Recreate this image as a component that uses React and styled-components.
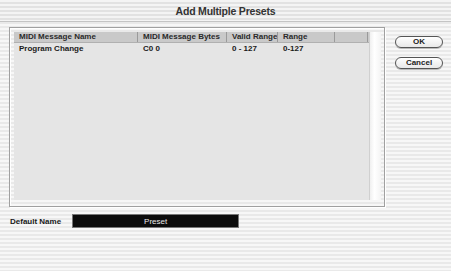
import React from "react";
import styled, { createGlobalStyle } from "styled-components";

const Global = createGlobalStyle`
  html, body { margin: 0; padding: 0; }
  body {
    width: 451px; height: 271px; overflow: hidden;
    font-family: "Liberation Sans", "DejaVu Sans", sans-serif;
  }
`;

const Window = styled.div`
  width: 451px;
  height: 271px;
  display: flex;
  flex-direction: column;
  background: repeating-linear-gradient(
    to bottom,
    #f7f7f7 0px, #f7f7f7 2px,
    #e9e9e9 2px, #e9e9e9 4px
  );
`;

const TitleBar = styled.div`
  height: 22px;
  display: flex;
  align-items: center;
  justify-content: center;
  font-size: 10.5px;
  font-weight: bold;
  letter-spacing: -0.2px;
  color: #333;
  border-bottom: 1px solid #c4c4c4;
  box-sizing: border-box;
  background: repeating-linear-gradient(
    to bottom,
    #f4f4f4 0px, #f4f4f4 2px,
    #e2e2e2 2px, #e2e2e2 4px
  );
`;

const Body = styled.div`
  display: flex;
  padding: 5px 0 0 9px;
  gap: 10px;
`;

const Panel = styled.div`
  width: 376px;
  height: 180px;
  box-sizing: border-box;
  border: 1px solid #a0a0a0;
  box-shadow: inset 1px 1px 0 #fff, 1px 1px 0 #fff;
  padding: 4px 3px 6px 4px;
  display: flex;
`;

const Table = styled.div`
  flex: 1;
  background: #e5e5e5;
  display: flex;
  flex-direction: column;
  font-size: 8px;
  color: #111;
`;

const Header = styled.div`
  display: flex;
  height: 11px;
  background: #c9c9c9;
  border-bottom: 1px solid #b0b0b0;
  box-sizing: border-box;
`;

const HeadCell = styled.div`
  width: ${p => p.$w}px;
  box-sizing: border-box;
  padding-left: 5px;
  border-right: 1px solid #9a9a9a;
  white-space: nowrap;
  overflow: hidden;
  line-height: 10px;
  font-weight: bold;
  color: #2a2a2a;
`;

const Row = styled.div`
  display: flex;
  height: 12px;
  line-height: 12px;
`;

const Cell = styled.div`
  width: ${p => p.$w}px;
  box-sizing: border-box;
  padding-left: 5px;
  white-space: nowrap;
  overflow: hidden;
  font-weight: bold;
  color: #1a1a1a;
`;

const Scroll = styled.div`
  width: 11px;
  background: linear-gradient(to right, #f0f0f0, #ffffff 40%, #f4f4f4);
  border-left: 1px solid #d0d0d0;
`;

const Buttons = styled.div`
  display: flex;
  flex-direction: column;
  gap: 9px;
  padding-top: 9px;
`;

const Button = styled.button`
  width: 48px;
  height: 12px;
  border: 1px solid #555;
  border-radius: 7px;
  background: linear-gradient(to bottom, #ffffff, #e8e8e8);
  font-family: "Liberation Sans", "DejaVu Sans", sans-serif;
  font-size: 8px;
  font-weight: bold;
  color: #222;
  padding: 0;
  line-height: 10px;
  box-shadow: 0 1px 0 #bbb;
`;

const Footer = styled.div`
  display: flex;
  align-items: center;
  padding: 7px 0 0 10px;
  gap: 11px;
`;

const Label = styled.div`
  font-size: 8px;
  font-weight: bold;
  color: #1a1a1a;
`;

const Field = styled.div`
  width: 167px;
  height: 14px;
  box-sizing: border-box;
  background: #0c0c0c;
  border: 1px solid #777;
  color: #e8e8e8;
  font-size: 8px;
  display: flex;
  align-items: center;
  justify-content: center;
`;

const cols = [124, 89, 51, 57, 33];

export default function App() {
  return (
    <>
      <Global />
      <Window>
        <TitleBar>Add Multiple Presets</TitleBar>
        <Body>
          <Panel>
            <Table>
              <Header>
                <HeadCell $w={cols[0]}>MIDI Message Name</HeadCell>
                <HeadCell $w={cols[1]}>MIDI Message Bytes</HeadCell>
                <HeadCell $w={cols[2]}>Valid Range</HeadCell>
                <HeadCell $w={cols[3]}>Range</HeadCell>
                <HeadCell $w={cols[4]}></HeadCell>
              </Header>
              <Row>
                <Cell $w={cols[0]}>Program Change</Cell>
                <Cell $w={cols[1]}>C0 0</Cell>
                <Cell $w={cols[2]}>0 - 127</Cell>
                <Cell $w={cols[3]}>0-127</Cell>
              </Row>
            </Table>
            <Scroll />
          </Panel>
          <Buttons>
            <Button>OK</Button>
            <Button>Cancel</Button>
          </Buttons>
        </Body>
        <Footer>
          <Label>Default Name</Label>
          <Field>Preset</Field>
        </Footer>
      </Window>
    </>
  );
}
